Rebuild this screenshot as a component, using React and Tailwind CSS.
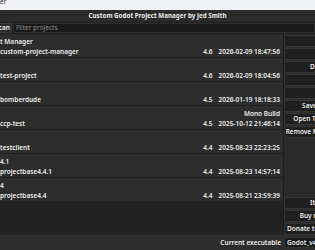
import React from "react";

const projects = [
  { name: "t Manager", folder: "custom-project-manager", version: "4.6", date: "2026-02-09 18:47:56" },
  { name: "", folder: "test-project", version: "4.6", date: "2026-02-09 18:04:56" },
  { name: "", folder: "bomberdude", version: "4.5", date: "2026-01-19 18:18:33" },
  { name: "", folder: "ccp-test", version: "4.5", date: "2025-10-12 21:46:14", tag: "Mono Build" },
  { name: "", folder: "testclient", version: "4.4", date: "2025-08-23 22:23:25" },
  { name: "4.1", folder: "projectbase4.4.1", version: "4.4", date: "2025-08-23 14:57:14" },
  { name: "4", folder: "projectbase4.4", version: "4.4", date: "2025-08-21 23:59:39" },
];

const topActions = ["Edit", "Run", "Duplicate", "Move", "Tags", "Save Template", "Open Terminal Here", "Remove Missing Projects"];
const bottomActions = ["Itch page", "Buy me a coffee", "Donate to Godot Engine"];

function SideButton({ label }) {
  return (
    <div className="w-[82px] h-[12px] shrink-0 flex items-center justify-center bg-[#1f1f1f] border border-[#363636] rounded-[1px] whitespace-nowrap">
      {label}
    </div>
  );
}

export default function App() {
  return (
    <div className="w-[315px] h-[250px] overflow-hidden flex flex-col bg-[#232323] text-[#ececec] text-[6.5px] font-['Noto_Sans',sans-serif]">
      {/* os caption */}
      <div className="h-[10px] shrink-0 bg-[#f0f2f5] text-[#333] leading-[6px] overflow-hidden">
        <span className="block -mt-[1px]">er</span>
      </div>

      {/* title */}
      <div className="h-[12px] shrink-0 bg-[#2a2a2a] flex items-center justify-center text-[6.25px] font-bold whitespace-nowrap">
        Custom Godot Project Manager by Jed Smith
      </div>

      {/* toolbar */}
      <div className="h-[12px] shrink-0 bg-[#1e1e1e] flex items-stretch gap-[1px] py-[1px]">
        <div className="w-[12px] flex items-center justify-end pr-[1px] bg-[#2c2c2c] border-y border-r border-[#3a3a3a] font-semibold">can</div>
        <div className="flex-1 flex items-center pl-[2px] bg-[#191919] border border-[#2f2f2f] text-[#8c8c8c]">Filter projects</div>
      </div>

      <div className="flex flex-1 min-h-0">
        {/* project list */}
        <div className="w-[283px] shrink-0 flex flex-col">
          {projects.map((p, i) => (
            <div key={p.folder} className={`h-[23px] shrink-0 bg-[#2d2d2d] pt-[3px] pr-[3px] font-semibold leading-[10px] ${i > 0 ? "border-t border-[#1e1e1e] h-[24px]" : ""}`}>
              <div className="flex justify-between h-[10px]">
                <span className="whitespace-nowrap">{p.name}</span>
                <span>{p.tag}</span>
              </div>
              <div className="flex justify-between h-[10px]">
                <span className="whitespace-nowrap">{p.folder}</span>
                <span className="flex gap-[6px] whitespace-nowrap">
                  <span>{p.version}</span>
                  <span>{p.date}</span>
                </span>
              </div>
            </div>
          ))}
          <div className="flex-1 bg-[#232323]" />
        </div>

        {/* side actions */}
        <div className="w-[32px] shrink-0 overflow-hidden bg-[#2a2a2a] border-l border-[#1b1b1b] flex flex-col justify-between pt-[1px] pb-0 font-semibold">
          <div className="flex flex-col gap-[1px]">
            {topActions.map((a) => (
              <SideButton key={a} label={a} />
            ))}
          </div>
          <div className="flex flex-col gap-[1px]">
            {bottomActions.map((a) => (
              <SideButton key={a} label={a} />
            ))}
          </div>
        </div>
      </div>

      {/* executable bar */}
      <div className="h-[15px] shrink-0 flex bg-[#2d2d2d] font-semibold">
        <div className="w-[283px] shrink-0 flex items-center justify-end pr-[2px] whitespace-nowrap">Current executable</div>
        <div className="w-[100px] shrink-0 my-[2px] ml-[1px] flex items-center pl-[2px] bg-[#1b1b1b] border border-[#333] whitespace-nowrap">
          Godot_v4.6-stable_linux.x86_64
        </div>
      </div>
    </div>
  );
}
